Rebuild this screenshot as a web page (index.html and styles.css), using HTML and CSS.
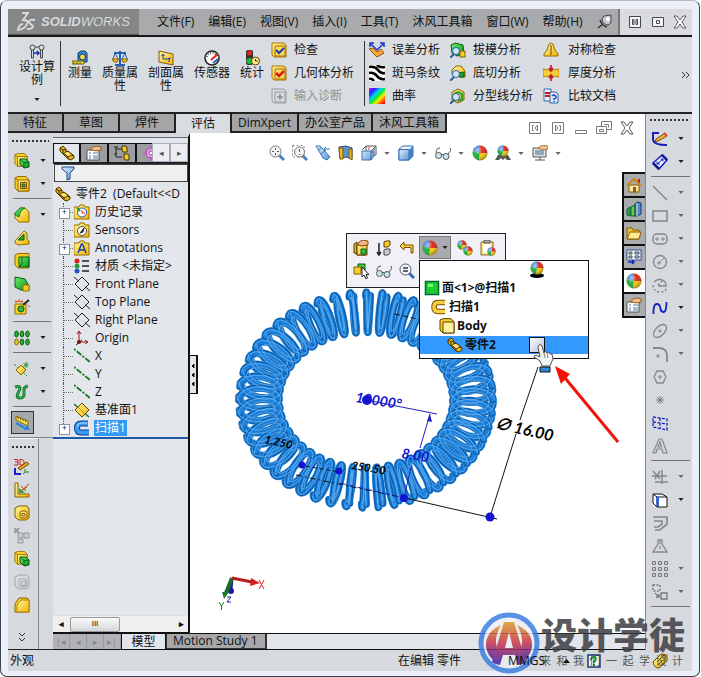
FILE: index.html
```html
<!DOCTYPE html>
<html lang="zh-CN">
<head>
<meta charset="utf-8">
<title>SOLIDWORKS</title>
<link rel="stylesheet" href="styles.css">
</head>
<body>
<svg class="sprite" aria-hidden="true">
<defs>
<linearGradient id="gy" x1="0" y1="0" x2="1" y2="1"><stop offset="0" stop-color="#fff6a0"/><stop offset="1" stop-color="#f0b400"/></linearGradient>
<linearGradient id="gg" x1="0" y1="0" x2="1" y2="1"><stop offset="0" stop-color="#6cf06c"/><stop offset="1" stop-color="#089018"/></linearGradient>
<linearGradient id="gb" x1="0" y1="0" x2="1" y2="1"><stop offset="0" stop-color="#e4f1fd"/><stop offset="1" stop-color="#5a95da"/></linearGradient>
<linearGradient id="rainbow" x1="0" y1="0" x2="1" y2="1"><stop offset="0" stop-color="#f0f"/><stop offset=".2" stop-color="#22f"/><stop offset=".38" stop-color="#0cf"/><stop offset=".52" stop-color="#0e3"/><stop offset=".68" stop-color="#fe0"/><stop offset=".85" stop-color="#f40"/><stop offset="1" stop-color="#e00"/></linearGradient>
<radialGradient id="shine" cx=".35" cy=".3" r=".7"><stop offset="0" stop-color="#fff" stop-opacity=".65"/><stop offset=".5" stop-color="#fff" stop-opacity="0"/><stop offset="1" stop-color="#000" stop-opacity=".3"/></radialGradient>
<linearGradient id="brand" x1="0" y1="0" x2="0" y2="1"><stop offset="0" stop-color="#d99a28"/><stop offset=".5" stop-color="#c8344a"/><stop offset="1" stop-color="#3a22b0"/></linearGradient>
</defs>
<symbol id="ball" viewBox="0 0 16 16"><path d="M8 8V.5A7.500 7.500 0 0 0 .8 6Z" fill="#2b6fd6"/><path d="M8 8L.8 6A7.500 7.500 0 0 0 7 15.400Z" fill="#1fae3c"/><path d="M8 8L7 15.400A7.500 7.500 0 0 0 15.500 8Z" fill="#f5c518"/><path d="M8 8H15.500A7.500 7.500 0 0 0 8 .5Z" fill="#d92b1f"/><circle cx="8" cy="8" r="7.500" fill="url(#shine)"/></symbol>
<symbol id="cube" viewBox="0 0 16 16"><path d="M1 2L4 .5H12L15 4V15H4L1 12Z" fill="#f6cf2c" stroke="#9a6a00"/><path d="M4 4H15V15H4Z" fill="url(#gy)" stroke="#9a6a00"/><path d="M1 2L4 4" stroke="#9a6a00"/></symbol>
<symbol id="boss" viewBox="0 0 16 16"><use href="#cube" width="14" height="14"/><path d="M6 6L12 6L15 9V14L10 15L6 11Z" fill="url(#gg)" stroke="#075e10"/><path d="M6 6L10 9.500V15M10 9.500L15 9" stroke="#075e10" fill="none"/></symbol>
<symbol id="cut" viewBox="0 0 16 16"><use href="#cube"/><path d="M6.500 6.500H12.500V12.500H6.500Z" fill="#e9d35a" stroke="#7a5500"/><path d="M8 8H11V11H8Z" fill="#3fae3f" stroke="#5a4a00"/></symbol>
<symbol id="fillet" viewBox="0 0 16 16"><path d="M1 6L6 1H11L15 5V15H5L1 11Z" fill="url(#gy)" stroke="#9a6a00"/><path d="M1 6L6 1H11Q6 3 5 10L1 8Z" fill="url(#gg)" stroke="#18871f"/></symbol>
<symbol id="rib" viewBox="0 0 16 16"><path d="M1 11L10 1L13 3V9L15 11V14L5 15L1 13Z" fill="url(#gy)" stroke="#9a6a00"/><path d="M4 10L10 4V10Z" fill="#28a838" stroke="#075e10"/></symbol>
<symbol id="shell" viewBox="0 0 16 16"><path d="M1 2L4 .5H15V15H4L1 12Z" fill="#f2cb27" stroke="#9a6a00"/><path d="M5 4H15V14H5Z" fill="url(#gg)" stroke="#075e10"/><path d="M5 14L8 11V4" stroke="#075e10" fill="none"/></symbol>
<symbol id="draft" viewBox="0 0 16 16"><path d="M1 1L11 3L15 10V14H7L1 11Z" fill="url(#gg)" stroke="#075e10"/><path d="M9 9H15V15H9Z" fill="#f6cf2c" stroke="#9a6a00"/></symbol>
<symbol id="wizard" viewBox="0 0 16 16"><path d="M1 5H12V15H1Z" fill="#f6cf2c" stroke="#9a6a00"/><circle cx="7" cy="10" r="3" fill="#3bb044" stroke="#075e10"/><path d="M9 6L15 1" stroke="#222" stroke-width="2"/><path d="M2 1V4M5 0V3M8 1V4M14 6L16 8M1 2.500H9" stroke="#d8621c"/></symbol>
<symbol id="pattern" viewBox="0 0 16 16"><g fill="#2fae3a" stroke="#0a5e12"><ellipse cx="2.500" cy="4" rx="1.800" ry="3"/><ellipse cx="8" cy="4" rx="1.800" ry="3"/><ellipse cx="13.500" cy="4" rx="1.800" ry="3"/><ellipse cx="8" cy="12" rx="1.800" ry="3"/><ellipse cx="13.500" cy="12" rx="1.800" ry="3"/><ellipse cx="2.500" cy="12" rx="1.800" ry="3" fill="#f4cd26" stroke="#8a6200"/></g></symbol>
<symbol id="refgeo" viewBox="0 0 16 16"><path d="M0 3L13 15" stroke="#159a2a" stroke-dasharray="3 1"/><path d="M7 4L12 9L7 14L2 9Z" fill="url(#gy)" stroke="#8a6200"/><path d="M12 1V7M9.500 2.500L14.500 5.500M14.500 2.500L9.500 5.500" stroke="#159a2a"/></symbol>
<symbol id="curve" viewBox="0 0 16 16"><path d="M1 3Q8 1 5 7Q1 14 6 14Q11 14 10 8Q9 3 14 2" fill="none" stroke="#13782a" stroke-width="3"/><path d="M1 3Q8 1 5 7Q1 14 6 14Q11 14 10 8Q9 3 14 2" fill="none" stroke="#3bc05a"/></symbol>
<symbol id="instant" viewBox="0 0 16 16"><path d="M1 1L13 6V11L1 5Z" fill="#f5e05a" stroke="#8a6a00"/><path d="M3 2V4M5.500 3V5M8 4V6M10.500 5V7" stroke="#6b5200"/><path d="M1 8L10 13" stroke="#2d84d8" stroke-width="2.500"/><path d="M9 15L15 15L12 9Z" fill="#2d84d8"/></symbol>
<symbol id="sk3d" viewBox="0 0 16 16"><path d="M0 .5H4V6H0M1 3H4M6 .5V6H8L10 5V2L8 .5Z" fill="none" stroke="#c22"/><path d="M1 9V15H7" fill="none" stroke="#1428c8" stroke-width="2"/><path d="M4 9L13 3L15 5L6 11Z" fill="#e9a92c" stroke="#7a4a00"/><path d="M11 10V13H15M11 13L9 15" stroke="#18871f" fill="none"/></symbol>
<symbol id="angle" viewBox="0 0 16 16"><path d="M1 1H4V12H15V15H1Z" fill="url(#gy)" stroke="#8a6200"/><path d="M5 11V6L11 11Z" fill="#28a838"/><path d="M8 8L15 2M7 4L12 9M7 9L13 5" stroke="#b94a18"/></symbol>
<symbol id="box2" viewBox="0 0 16 16"><path d="M1 3L5 1H13L15 4V13L12 15H5L1 12Z" fill="url(#gy)" stroke="#8a5c00"/><rect x="6" y="6" width="7" height="7" rx="2" fill="#f9e678" stroke="#8a5c00"/><path d="M8 11V8.500H11V11Z" fill="none" stroke="#8a5c00"/></symbol>
<symbol id="gray1" viewBox="0 0 16 16"><g fill="#c9ccd0" stroke="#97999c"><path d="M4 5H9V10H4ZM10 5H15V10H10ZM4 11H9V15H4Z"/><path d="M0 0L5 5M5 0L0 5" stroke-width="2"/></g></symbol>
<symbol id="gray2" viewBox="0 0 16 16"><g fill="none" stroke="#a4a6a9"><path d="M1 3L5 1H13L15 4V13L12 15H5L1 12Z"/><rect x="5" y="5" width="8" height="8" rx="2"/><rect x="7.500" y="7.500" width="4" height="4"/></g></symbol>
<symbol id="cham" viewBox="0 0 16 16"><path d="M1 7L5 1H13L15 3V15H1Z" fill="#f9d32f" stroke="#8a5c00"/><path d="M3 8L7 3H15V15H3Z" fill="url(#gy)" stroke="#b27c00"/></symbol>
<symbol id="more" viewBox="0 0 16 16"><path d="M5 3L8 6L11 3M5 8L8 11L11 8" fill="none" stroke="#333"/></symbol>
<symbol id="part" viewBox="0 0 16 16"><path d="M1 3L4 1L7 4V7L9 6L13 9L15 11V13L12 15L9 14L1 6Z" fill="#e8b01c" stroke="#4a3500"/><path d="M1 3L4 5L4 8L9 12L9 14M4 5L7 4M9 12L12 10L15 11M9 12L5 8L9 6" fill="none" stroke="#4a3500"/><path d="M5 8L9 7L12 10L9 11Z" fill="#ffe97a"/></symbol>
<symbol id="props" viewBox="0 0 16 16"><path d="M1 5H13V15H1Z" fill="#fff" stroke="#555"/><path d="M3 8H5M3 11H5M3 13H5M7 8H12M7 11H12M7 13H12" stroke="#4878b0"/><path d="M4 5Q7 1 11 1L15 2V5L10 6L7 5Z" fill="#f2c08a" stroke="#9a5b1c"/></symbol>
<symbol id="config" viewBox="0 0 16 16"><path d="M2 2V12H8M2 4H8M0 2H4M0 9H3" stroke="#222" fill="none"/><path d="M8 1L12 1L13 3V7H9L8 5ZM10 9H14L15 11V15H11L10 13Z" fill="#f2cb27" stroke="#4a3500"/></symbol>
<symbol id="target" viewBox="0 0 16 16"><path d="M9 0V16M1 8H16" stroke="#c04ec0"/><circle cx="9" cy="8" r="5" fill="#e6a0e6" stroke="#b23ab2"/><circle cx="9" cy="8" r="2" fill="#fff" stroke="#b23ab2"/></symbol>
<symbol id="funnel" viewBox="0 0 16 16"><path d="M2 2H14V4L10 8V14L7 15V8L2 4Z" fill="url(#gb)" stroke="#164a94"/></symbol>
<symbol id="hist" viewBox="0 0 16 16"><path d="M0 3H5L6 1H10L11 3H15V15H0Z" fill="url(#gy)" stroke="#9a6a00"/><circle cx="8" cy="8.500" r="4.500" fill="#fff" stroke="#2456b4"/><path d="M8 6V9H11" stroke="#c22" fill="none"/><path d="M3 4L6 7" stroke="#1a9a2a" stroke-width="2"/></symbol>
<symbol id="sensor" viewBox="0 0 16 16"><path d="M0 3H5L6 1H10L11 3H15V15H0Z" fill="url(#gy)" stroke="#9a6a00"/><circle cx="8" cy="9" r="4.500" fill="#f8f8f8" stroke="#555"/><path d="M6 11L10 6L9 10Z" fill="#333" stroke="#333"/></symbol>
<symbol id="annot" viewBox="0 0 16 16"><path d="M0 3H5L6 1H10L11 3H15V15H0Z" fill="url(#gy)" stroke="#9a6a00"/><path d="M4 13L7.500 4H8.500L12 13M5.500 10H10.500" fill="none" stroke="#1a3fae" stroke-width="1.500"/></symbol>
<symbol id="mat" viewBox="0 0 16 16"><circle cx="3" cy="3" r="2.500" fill="#d22"/><circle cx="3" cy="8" r="2.500" fill="#2a9a3a"/><circle cx="3" cy="13" r="2.500" fill="#2456c8"/><path d="M8 3H15M8 8H15M8 13H15" stroke="#222" stroke-width="1.500"/></symbol>
<symbol id="plane" viewBox="0 0 16 16"><path d="M8 1L15 8L8 15L1 8ZM0 1L16 15" fill="none" stroke="#222"/><path d="M5 5L11 11" stroke="#e3e6ea" stroke-width="1.500"/></symbol>
<symbol id="origin" viewBox="0 0 16 16"><path d="M5 13V2M5 12H14M3 4L5 1L7 4M11 10L14 12L11 14" fill="none" stroke="#a01018"/><path d="M2 15L8 10" stroke="#222"/><circle cx="5" cy="12" r="2" fill="#701018"/></symbol>
<symbol id="axis" viewBox="0 0 16 16"><path d="M0 1L16 14" stroke="#157a24" stroke-width="1.800" stroke-dasharray="2 1.500 6 1.500"/></symbol>
<symbol id="dplane" viewBox="0 0 16 16"><path d="M0 2L15 15" stroke="#157a24" stroke-width="1.500"/><path d="M8 1L15 8L8 15L1 8Z" fill="url(#gy)" stroke="#6a4a00"/><path d="M4 5L10 11" stroke="#c09000"/></symbol>
<symbol id="sweep" viewBox="0 0 16 16"><path d="M14 3.500H7Q3 3.500 3 8T7 12.500H14" fill="none" stroke="#7a4e00" stroke-width="5.500"/><path d="M14 3.500H7Q3 3.500 3 8T7 12.500H14" fill="none" stroke="#f6cf3c" stroke-width="3.500"/></symbol>
<symbol id="sweepb" viewBox="0 0 16 16"><path d="M14 3.500H7Q3 3.500 3 8T7 12.500H15" fill="none" stroke="#0b3a94" stroke-width="6"/><path d="M14 3.500H7Q3 3.500 3 8T7 12.500H15" fill="none" stroke="#3c9af4" stroke-width="4"/><path d="M13 3H7Q4 3 3 7" fill="none" stroke="#b4dcff"/></symbol>
<symbol id="study" viewBox="0 0 16 16"><g fill="none" stroke="#444"><circle cx="3.500" cy="3.500" r="2.500"/><circle cx="12.500" cy="3.500" r="2.500"/><path d="M2.500 6V14H4.500V6M11.500 6V14H13.500V6M6 3H10"/></g><path d="M5 9H10M8 7L10 9L8 11" stroke="#1730d0" fill="none" stroke-width="1.500"/></symbol>
<symbol id="measure" viewBox="0 0 16 16"><path d="M6 3L9 1H13L15 3V12H6Z" fill="#3a86d8" stroke="#12396e"/><circle cx="10.500" cy="7" r="3" fill="#f8d848" stroke="#12396e"/><path d="M0 11H12V14H0Z" fill="#f9e23c" stroke="#6b5a00"/><path d="M2 12V14M5 12V14M8 12V14" stroke="#6b5a00"/></symbol>
<symbol id="mass" viewBox="0 0 16 16"><path d="M8 1V14M2 3H14" stroke="#2360b8" stroke-width="2"/><path d="M3 3L1 9M3 3L6 9M13 3L10 9M13 3L15 9" stroke="#2360b8"/><path d="M0 9H6.500L5 12H2ZM9.500 9H16L14 12H11Z" fill="#f5c92a" stroke="#8a5c00"/><path d="M3 15H13" stroke="#2360b8" stroke-width="2"/></symbol>
<symbol id="section" viewBox="0 0 16 16"><path d="M1 1L15 4V15L1 12Z" fill="url(#gy)" stroke="#8a5c00"/><path d="M5 9V4M3.500 6L5 4L6.500 6M5 9H12V7M10 8L12 10L10 12" fill="none" stroke="#223fa8"/></symbol>
<symbol id="gauge" viewBox="0 0 16 16"><circle cx="8" cy="8" r="7" fill="#fff" stroke="#222" stroke-width="1.500"/><path d="M3 7A5 5 0 0 1 12 5" fill="none" stroke="#555" stroke-dasharray="1 1.500" stroke-width="2"/><path d="M7 10L14 4" stroke="#d22" stroke-width="2"/><path d="M9 13L14 9" stroke="#235fc4" stroke-width="2"/></symbol>
<symbol id="stats" viewBox="0 0 16 16"><rect x="2" y="0" width="7" height="15" rx="2" fill="#333"/><circle cx="5.500" cy="3" r="2.500" fill="#e8281c"/><circle cx="5.500" cy="11" r="3" fill="#24b83a"/><circle cx="11.500" cy="11" r="4" fill="#fde98c" stroke="#5a4a00"/><path d="M11.500 9V11H13.500" fill="none" stroke="#222"/></symbol>
<symbol id="chkb" viewBox="0 0 16 16"><path d="M1 1H13L15 3V15H3L1 13Z" fill="url(#gy)" stroke="#a87400"/><path d="M4 4H14V14H4Z" fill="#fbd95e" stroke="#a87400"/><path d="M5 8L8 11L13 6" fill="none" stroke="#1e3cae" stroke-width="2"/></symbol>
<symbol id="chkr" viewBox="0 0 16 16"><path d="M1 1H13L15 3V15H3L1 13Z" fill="url(#gy)" stroke="#a87400"/><path d="M4 4H14V14H4Z" fill="#fbd95e" stroke="#a87400"/><path d="M5 8L8 11L13 6" fill="none" stroke="#d81c10" stroke-width="2.500"/></symbol>
<symbol id="chkg" viewBox="0 0 16 16"><path d="M1 1H13L15 3V15H3L1 13ZM4 4H14V14H4Z" fill="none" stroke="#9a9c9e"/><path d="M9 6V12M6 9H12" stroke="#8a8c8e" stroke-width="1.500"/></symbol>
<symbol id="dev" viewBox="0 0 16 16"><path d="M0 7L4 6L8 10L12 7L15 11L8 15Z" fill="#f3a93c" stroke="#9a5200"/><path d="M2 2L8 8M8 8L14 2M1 5V1H5M11 1H15V5" fill="none" stroke="#1c34c4" stroke-width="1.500"/></symbol>
<symbol id="zebra" viewBox="0 0 16 16"><path d="M0 0H16V16H0Z" fill="#fff"/><path d="M0 2Q6 1 9 5T16 8M0 8Q5 7 8 11T16 14M0 14Q3 13 5 16M8 0Q11 3 16 2" stroke="#000" stroke-width="2.600" fill="none"/></symbol>
<symbol id="curv" viewBox="0 0 16 16"><path d="M0 0H16V16H0Z" fill="url(#rainbow)"/></symbol>
<symbol id="lens" viewBox="0 0 16 16"><circle cx="6" cy="9" r="3.500" fill="#cfe6fa" stroke="#2b5fa0"/><path d="M4 12L0 16" stroke="#2b5fa0" stroke-width="2"/></symbol>
<symbol id="dr2" viewBox="0 0 16 16"><path d="M1 3L5 1L13 3L14 12L7 14L2 11Z" fill="url(#gg)" stroke="#075e10"/><path d="M10 9H15V15H10Z" fill="#f6cf2c" stroke="#8a5c00"/><use href="#lens"/></symbol>
<symbol id="under" viewBox="0 0 16 16"><path d="M2 5L6 1H11L15 6V12H9L2 9Z" fill="url(#gy)" stroke="#8a5c00"/><path d="M8 8L14 7V12H10Z" fill="#1fa032" stroke="#075e10"/><use href="#lens"/></symbol>
<symbol id="parting" viewBox="0 0 16 16"><path d="M2 4L8 1L14 4V12L8 15L2 12Z" fill="url(#gy)" stroke="#8a5c00"/><path d="M4 6L8 4L12 6V11L8 13" fill="none" stroke="#1fa032" stroke-width="2"/><use href="#lens"/></symbol>
<symbol id="sym" viewBox="0 0 16 16"><path d="M6 2Q8 0 10 2L12 8L15 12V14H1V12L4 8Z" fill="url(#gy)" stroke="#9a6a00"/><path d="M8 3V13" stroke="#7a3a00"/></symbol>
<symbol id="thick" viewBox="0 0 16 16"><path d="M0 4Q8 7 16 4V12Q8 9 0 12Z" fill="#f8cf38" stroke="#b08000"/><path d="M8 0V5M6 3L8 6L10 3M8 16V11M6 13L8 10L10 13" fill="none" stroke="#c81818" stroke-width="1.600"/></symbol>
<symbol id="compare" viewBox="0 0 16 16"><path d="M1 1H8V13H1Z" fill="#eaf2ff" stroke="#3a66a8"/><path d="M2 5H7M2 8H7" stroke="#d11" stroke-width="2"/><path d="M7 4H13L15 6V15H7Z" fill="#dceafc" stroke="#3a66a8"/><path d="M9 8Q11 6 12.500 8T11 11V12M11 13V14" stroke="#1f49b8" fill="none" stroke-width="1.500"/></symbol>
<symbol id="pin" viewBox="0 0 16 16"><path d="M7 2L14 1L14 9L11 11Q5 10 5 5Z" fill="#c4c8ce" stroke="#44484c"/><path d="M3 6Q5 12 10 13M6 10L1 14" fill="none" stroke="#333" stroke-width="1.500"/><circle cx="11" cy="5" r="2" fill="#fff"/></symbol>
<symbol id="wsplit" viewBox="0 0 16 16"><path d="M2.500 2.500H13.500V13.500H2.500ZM5.500 5.500H7V10.500H5.500ZM9 5.500H10.500V10.500H9Z" fill="#f4f5f7" stroke="#44484c"/></symbol>
<symbol id="wmax" viewBox="0 0 16 16"><path d="M2.500 3.500H13.500V12.500H2.500ZM6.500 6.500H9.500V9.500H6.500Z" fill="#f4f5f7" stroke="#44484c"/></symbol>
<symbol id="wx" viewBox="0 0 16 16"><path d="M2 2H5L8 6L11 2H14L10 8L14 14H11L8 10L5 14H2L6 8Z" fill="#fff" stroke="#55595e"/></symbol>
<symbol id="wl" viewBox="0 0 16 16"><path d="M2.500 2.500H13.500V13.500H2.500ZM7 5.500H5.500V10.500H7M10.500 5L8 8L10.500 11Z" fill="none" stroke="#777b80"/></symbol>
<symbol id="wr" viewBox="0 0 16 16"><path d="M2.500 2.500H13.500V13.500H2.500ZM9 5.500H10.500V10.500H9M5.500 5L8 8L5.500 11Z" fill="none" stroke="#777b80"/></symbol>
<symbol id="wmin" viewBox="0 0 16 16"><path d="M2.500 10.500H13.500V13.500H2.500Z" fill="#fff" stroke="#777b80"/></symbol>
<symbol id="wrest" viewBox="0 0 16 16"><path d="M.5 6.500H10.500V13.500H.5ZM5.500 6.500V1.500H15.500V9.500H10.500M3.500 9.500H7.500V11.500H3.500ZM8 4.500H12.500V7.500" fill="none" stroke="#777b80"/></symbol>
<symbol id="zoomf" viewBox="0 0 16 16"><path d="M10 10L15 15" stroke="#4d82c4" stroke-width="3"/><circle cx="6.500" cy="6.500" r="5.500" fill="#f1f5f9" stroke="#777"/><path d="M6.500 3V10M3 6.500H10" stroke="#555" stroke-dasharray="2 3"/></symbol>
<symbol id="zooma" viewBox="0 0 16 16"><path d="M10 10L15 15" stroke="#4d82c4" stroke-width="3"/><path d="M.5 .5H12V12H.5Z" fill="none" stroke="#888" stroke-dasharray="2 2"/><circle cx="7.500" cy="7" r="5" fill="#f1f5f9" stroke="#777"/><path d="M7.500 4V7M7.500 9V10" stroke="#555"/></symbol>
<symbol id="prev" viewBox="0 0 16 16"><path d="M1 1L5 1L15 12L12 15L8 13Z" fill="url(#gb)" stroke="#2f74b8"/><path d="M3 5L6 3M6 9L10 6" stroke="#2f74b8"/><path d="M15 4H9M11 2L9 4L11 6" stroke="#2f74b8" fill="none"/></symbol>
<symbol id="sect" viewBox="0 0 16 16"><path d="M1 2L8 1L14 3V14L8 12L2 14Z" fill="#5b94cf" stroke="#2d4f7c"/><path d="M1 3H5V14H2ZM11 4H14V15L11 13Z" fill="#e8c02c" stroke="#7a5a00"/></symbol>
<symbol id="orient" viewBox="0 0 16 16"><path d="M5 1H15V10H5ZM5 1L1 5M15 1L11 5" fill="#fff" stroke="#555"/><path d="M1 6H10V15H1ZM10 6L13 3V11L10 15" fill="url(#gb)" stroke="#3b6fae"/><path d="M8 5V2M13 7H10" stroke="#d33"/></symbol>
<symbol id="disp" viewBox="0 0 16 16"><path d="M1 4L5 1H15V11L11 15H1Z" fill="#eef5fd" stroke="#3b6fae"/><path d="M1 4.500H11V15H1Z" fill="url(#gb)" stroke="#3b6fae"/><path d="M11 5L15 1V11L11 15Z" fill="#3f7ccc"/></symbol>
<symbol id="glass" viewBox="0 0 16 16"><g fill="#c9e6f2" stroke="#555"><circle cx="3.500" cy="10.500" r="3"/><circle cx="11" cy="11.500" r="3"/><path d="M6 10Q7 8 8 10M1 8Q1 3 5 3M13 9L16 5L15 3" fill="none"/></g></symbol>
<symbol id="scene" viewBox="0 0 16 16"><path d="M0 15L3 10H13L16 15H12L10 13L8 15L6 13L4 15Z" fill="#555"/><use href="#ball" x="2" y="0" width="12" height="12"/></symbol>
<symbol id="monitor" viewBox="0 0 16 16"><path d="M1 3H14V12H1Z" fill="#dfe5ea" stroke="#555"/><path d="M3 5H12V10H3Z" fill="#8fa8bd"/><path d="M8 12V15M3 15H13" stroke="#555"/><path d="M6 3L10 0L16 1V4L11 5Z" fill="#f2c08a" stroke="#b0763c"/></symbol>
<symbol id="editf" viewBox="0 0 16 16"><path d="M1 4L4 2V15H12V15L1 13Z" fill="#e8b01c" stroke="#5a3c00"/><path d="M4 5H14V15H4Z" fill="url(#gy)" stroke="#5a3c00"/><path d="M8 9H13V14H8Z" fill="#2fc43c" stroke="#063"/><path d="M4 4L9 0L15 1V5L8 6Z" fill="#f2b480" stroke="#8a4a14"/></symbol>
<symbol id="down2" viewBox="0 0 16 16"><path d="M3 3V15M1 12L3 15L5 12" stroke="#222" fill="none" stroke-width="1.500"/><path d="M8 2L10 1H14V5L12 7H8Z" fill="#f6cf2c" stroke="#5a3c00"/><path d="M8 10L10 9H14V13L12 15H8Z" fill="#ccc" stroke="#444"/></symbol>
<symbol id="back" viewBox="0 0 16 16"><path d="M1 6L5 2V5H14V13H12V7.500H5V10Z" fill="#f8d638" stroke="#7a5200"/></symbol>
<symbol id="balls" viewBox="0 0 16 16"><use href="#ball" x="0" y="0" width="10" height="10"/><use href="#ball" x="6" y="6" width="10" height="10"/></symbol>
<symbol id="clip" viewBox="0 0 16 16"><path d="M1 2H13V15H1Z" fill="#f8e08c" stroke="#8a6a1c"/><path d="M3 4H11V13H3Z" fill="#fff"/><path d="M4 0H10V3H4Z" fill="#aaa" stroke="#555"/><use href="#ball" x="7" y="7" width="9" height="9"/></symbol>
<symbol id="sel" viewBox="0 0 16 16"><path d="M5 1H12V7H5Z" fill="#3fc43f" stroke="#075e10"/><path d="M1 4H8V11H1Z" fill="#f6cf2c" stroke="#8a5c00"/><path d="M9 4V14L11 12L13 16L14.500 15L13 11.500H16Z" fill="#fff" stroke="#222"/></symbol>
<symbol id="zoomsel" viewBox="0 0 16 16"><path d="M10 10L15 15" stroke="#3568b4" stroke-width="3"/><circle cx="6.500" cy="6.500" r="5.500" fill="#f1f5f9" stroke="#556"/><path d="M4 5H9M4 8H9" stroke="#334" stroke-width="1.500"/></symbol>
<symbol id="face" viewBox="0 0 16 16"><path d="M1.500 1.500H14.500V14.500H1.500Z" fill="#1fce34" stroke="#063" stroke-width="1.500"/><path d="M4 4H9V7H4Z" fill="#72ff7c"/></symbol>
<symbol id="body" viewBox="0 0 16 16"><path d="M1 2L4 .7H12L15 4V15H4L1 12Z" fill="#f6cf2c" stroke="#5a3c00"/><path d="M4 4H15V15H4Z" fill="#fff0a0" stroke="#5a3c00"/></symbol>
<symbol id="home" viewBox="0 0 16 16"><path d="M12 2H14V7H12Z" fill="#b22"/><path d="M3 8H13V15H3Z" fill="#fbe6a0" stroke="#8a5c00"/><path d="M1 8.500L8 2L15 8.500" fill="none" stroke="#c78a10" stroke-width="2"/><path d="M7 10H10V15H7Z" fill="#8a5c20"/></symbol>
<symbol id="books" viewBox="0 0 16 16"><path d="M1 8L4 6V15L1 14Z" fill="#3aa83a" stroke="#063"/><path d="M5 6L9 4V15H5Z" fill="#5fce4c" stroke="#063"/><path d="M9 3L11 1L15 2V13L11 15H9Z" fill="#4a8ad8" stroke="#123a70"/><path d="M11 2V15" stroke="#ffe45a"/></symbol>
<symbol id="folder" viewBox="0 0 16 16"><path d="M1 3H6L7 5H13V14H1Z" fill="#f0c23c" stroke="#8a5c00"/><path d="M4 7H15L13 14H1Z" fill="#ffe894" stroke="#8a5c00"/></symbol>
<symbol id="palette" viewBox="0 0 16 16"><path d="M1 1H15V11H1Z" fill="#fffbe0" stroke="#2a50a8"/><path d="M3 3H6V5H3ZM9 3H13V5H9ZM3 7H6V9H3ZM9 7H13V9H9Z" fill="#f0d84c" stroke="#2a50a8"/><path d="M2 13H8M6 11L8 13L6 15" stroke="#1225c0" fill="none" stroke-width="1.500"/></symbol>
<symbol id="sketch" viewBox="0 0 16 16"><path d="M7 2H1V9Q2 14 15 14" fill="none" stroke="#1520b8" stroke-width="2"/><path d="M4 8L13 2L15 5L6 10L3 11Z" fill="#f0b040" stroke="#7a4a00"/><path d="M12 2L15 5" stroke="#d44" stroke-width="2"/></symbol>
<symbol id="dim" viewBox="0 0 16 16"><path d="M1 9L10 1L15 6L7 15Z" fill="#eef2ff" stroke="#1520b8" stroke-width="1.500"/><path d="M1 9L7 15M10 1L15 6" stroke="#111a90" stroke-width="2.500"/><path d="M5 10L11 5M5 7.500V10H8M8.500 5H11V7.500" stroke="#1520b8" fill="none"/></symbol>
<symbol id="line" viewBox="0 0 16 16"><path d="M1 1L15 15" stroke="#85888c" stroke-width="1.500"/></symbol>
<symbol id="rect" viewBox="0 0 16 16"><path d="M1 3H15V13H1Z" fill="none" stroke="#85888c" stroke-width="1.500"/></symbol>
<symbol id="slot" viewBox="0 0 16 16"><rect x="1" y="3" width="14" height="10" rx="4" fill="none" stroke="#85888c" stroke-width="1.500"/><path d="M4 7H6V9H4ZM10 7H12V9H10Z" fill="none" stroke="#85888c"/></symbol>
<symbol id="circ" viewBox="0 0 16 16"><circle cx="8" cy="8" r="6.500" fill="none" stroke="#85888c" stroke-width="1.300"/><path d="M7 9L12 4M6 8H8V10H6Z" fill="none" stroke="#85888c"/></symbol>
<symbol id="arc" viewBox="0 0 16 16"><path d="M2 5Q7 0 12 4Q15 7 14 9H7V7" fill="none" stroke="#85888c" stroke-width="1.300"/><path d="M1 8Q2 15 8 15T14 11M6 8L11 3" fill="none" stroke="#85888c" stroke-width="1.500" stroke-dasharray="2 2"/></symbol>
<symbol id="spline" viewBox="0 0 16 16"><path d="M1.500 14Q1 4 5 4Q8 4 8.500 9Q9 12 12 12Q14.500 11 14.500 2" fill="none" stroke="#1520b8" stroke-width="1.800"/></symbol>
<symbol id="ell" viewBox="0 0 16 16"><ellipse cx="8" cy="8" rx="8" ry="4.500" transform="rotate(-45 8 8)" fill="none" stroke="#85888c" stroke-width="1.300"/><path d="M6 8H10M8 6V10" stroke="#85888c"/></symbol>
<symbol id="fil2" viewBox="0 0 16 16"><path d="M1 2H7Q15 2 15 10V16" fill="none" stroke="#85888c" stroke-width="1.800"/><path d="M4 10H8M6 8V12" stroke="#85888c"/></symbol>
<symbol id="poly" viewBox="0 0 16 16"><path d="M5 2H11L14 8L11 14H5L2 8Z" fill="none" stroke="#85888c" stroke-width="1.300"/><path d="M6 8H10M8 6V10" stroke="#85888c"/></symbol>
<symbol id="pt" viewBox="0 0 16 16"><path d="M8 4V12M4 8H12M5 5L11 11M11 5L5 11" stroke="#777a7e"/></symbol>
<symbol id="pl2" viewBox="0 0 16 16"><path d="M1 2L15 4V15L1 12ZM1 7L15 9M8 3V13" fill="none" stroke="#1520b8" stroke-width="1.300" stroke-dasharray="3 1.500"/></symbol>
<symbol id="txt" viewBox="0 0 16 16"><path d="M1 15L7 1H10L15 15H11L10 11H5L4 15ZM6 9H9.500L8 4Z" fill="none" stroke="#85888c" stroke-width="1.200"/></symbol>
<symbol id="trim" viewBox="0 0 16 16"><path d="M0 7H15M3 13H16M10 1V15M1 2L8 10M8 2L3 10" fill="none" stroke="#85888c" stroke-width="1.500"/></symbol>
<symbol id="conv" viewBox="0 0 16 16"><path d="M1 2H10L15 5V15H5L1 11ZM5 5H15M5 5V15M1 2L5 5" fill="#fff" stroke="#111"/><path d="M4 5H7V15H5Z" fill="#1f5fe0"/></symbol>
<symbol id="offs" viewBox="0 0 16 16"><path d="M1 2H15V9L8 15H3M2 6H10V9L6 12H2" fill="none" stroke="#85888c" stroke-width="1.700"/></symbol>
<symbol id="mir" viewBox="0 0 16 16"><path d="M6 2H10V6L15 14H1L6 6ZM8 3V6M8 8V11" fill="none" stroke="#85888c" stroke-width="1.300"/></symbol>
<symbol id="lin" viewBox="0 0 16 16"><path d="M.5 .5H3.500V3.500H.5ZM6.500 .5H9.500V3.500H6.500ZM12.500 .5H15.500V3.500H12.500ZM.5 6.500H3.500V9.500H.5ZM6.500 6.500H9.500V9.500H6.500ZM12.500 6.500H15.500V9.500H12.500ZM.5 12.500H3.500V15.500H.5ZM6.500 12.500H9.500V15.500H6.500ZM12.500 12.500H15.500V15.500H12.500Z" fill="#ccc" stroke="#777a7e"/></symbol>
<symbol id="move" viewBox="0 0 16 16"><path d="M1 1H8V7H1Z" fill="none" stroke="#777a7e" stroke-dasharray="2 1.500" stroke-width="1.500"/><path d="M9 9H15V15H9ZM3 9L7 13M7 10V13H4" fill="none" stroke="#777a7e" stroke-width="1.300"/></symbol>
<symbol id="dn" viewBox="0 0 7 4"><path d="M0 0H7L3.500 4Z" fill="currentColor"/></symbol>
</svg>

<div class="window">
<header class="menubar">
  <div class="logo"><svg width="20" height="22" viewBox="0 0 20 22"><path d="M5 2H11L6 9Q12 9 10 13Q8 18 1 19Q2 13 6 13M18 9Q12 8 12 11Q13 13 16 15Q16 18 10 18" fill="none" stroke="#d8dadc" stroke-width="1.800"/></svg><span><b>SOLID</b>WORKS</span></div>
  <nav class="menus"><button>文件(F)</button><button>编辑(E)</button><button>视图(V)</button><button>插入(I)</button><button>工具(T)</button><button>沐风工具箱</button><button>窗口(W)</button><button>帮助(H)</button><button aria-label="固定"><svg class="i"><use href="#pin"/></svg></button></nav>
  <div class="winctl"><button aria-label="拆分"><svg class="i"><use href="#wsplit"/></svg></button><button aria-label="最大化"><svg class="i"><use href="#wmax"/></svg></button><button aria-label="关闭"><svg class="i"><use href="#wx"/></svg></button></div>
</header>

<section class="ribbon">
  <button class="big study"><svg class="i"><use href="#study"/></svg><span>设计算例</span><svg class="dn"><use href="#dn"/></svg></button>
  <i class="vsep"></i>
  <div class="bigs">
    <button class="big two"><svg class="i"><use href="#measure"/></svg><span>测量</span></button>
    <button class="big"><svg class="i"><use href="#mass"/></svg><span>质量属性</span></button>
    <button class="big"><svg class="i"><use href="#section"/></svg><span>剖面属性</span></button>
    <button class="big"><svg class="i"><use href="#gauge"/></svg><span>传感器</span></button>
    <button class="big two"><svg class="i"><use href="#stats"/></svg><span>统计</span></button>
  </div>
  <div class="col"><button><svg class="i"><use href="#chkb"/></svg>检查</button><button><svg class="i"><use href="#chkr"/></svg>几何体分析</button><button disabled><svg class="i"><use href="#chkg"/></svg>输入诊断</button></div>
  <i class="vsep mid"></i>
  <div class="col"><button><svg class="i"><use href="#dev"/></svg>误差分析</button><button><svg class="i"><use href="#zebra"/></svg>斑马条纹</button><button><svg class="i"><use href="#curv"/></svg>曲率</button></div>
  <div class="col"><button><svg class="i"><use href="#dr2"/></svg>拔模分析</button><button><svg class="i"><use href="#under"/></svg>底切分析</button><button><svg class="i"><use href="#parting"/></svg>分型线分析</button></div>
  <div class="col wide"><button><svg class="i"><use href="#sym"/></svg>对称检查</button><button><svg class="i"><use href="#thick"/></svg>厚度分析</button><button><svg class="i"><use href="#compare"/></svg>比较文档</button></div>
  <button class="overflow" aria-label="更多"><svg width="9" height="8" viewBox="0 0 9 8"><path d="M1 1L4 4L1 7M5 1L8 4L5 7" fill="none" stroke="#333"/></svg></button>
</section>

<div class="work">
 <div class="main">
  <div class="tabrow">
   <div class="tabs"><button>特征</button><button>草图</button><button>焊件</button><button class="on">评估</button><button>DimXpert</button><button>办公室产品</button><button>沐风工具箱</button></div>
   <div class="docctl"><button aria-label="左"><svg class="i"><use href="#wl"/></svg></button><button aria-label="右"><svg class="i"><use href="#wr"/></svg></button><button aria-label="最小化"><svg class="i"><use href="#wmin"/></svg></button><button aria-label="还原"><svg class="i"><use href="#wrest"/></svg></button><button aria-label="关闭文档"><svg class="i"><use href="#wx"/></svg></button></div>
  </div>
  <div class="below">
   <aside class="left">
    <div class="bar first">
     <i class="grip"></i>
     <button class="t"><svg class="i"><use href="#boss"/></svg><svg class="dn"><use href="#dn"/></svg></button>
     <button class="t"><svg class="i"><use href="#cut"/></svg><svg class="dn"><use href="#dn"/></svg></button>
     <hr>
     <button class="t"><svg class="i"><use href="#fillet"/></svg><svg class="dn"><use href="#dn"/></svg></button>
     <button class="t"><svg class="i"><use href="#rib"/></svg></button>
     <button class="t"><svg class="i"><use href="#shell"/></svg></button>
     <button class="t"><svg class="i"><use href="#draft"/></svg></button>
     <button class="t"><svg class="i"><use href="#wizard"/></svg></button>
     <hr>
     <button class="t"><svg class="i"><use href="#pattern"/></svg><svg class="dn"><use href="#dn"/></svg></button>
     <hr>
     <button class="t"><svg class="i"><use href="#refgeo"/></svg><svg class="dn"><use href="#dn"/></svg></button>
     <button class="t"><svg class="i"><use href="#curve"/></svg><svg class="dn"><use href="#dn"/></svg></button>
     <hr>
     <button class="t pressed"><svg class="i"><use href="#instant"/></svg></button>
    </div>
    <div class="bar second">
     <i class="grip"></i>
     <button class="t"><svg class="i"><use href="#sk3d"/></svg></button>
     <button class="t"><svg class="i"><use href="#angle"/></svg></button>
     <button class="t"><svg class="i"><use href="#box2"/></svg></button>
     <button class="t"><svg class="i"><use href="#gray1"/></svg></button>
     <button class="t"><svg class="i"><use href="#boss"/></svg></button>
     <button class="t"><svg class="i"><use href="#gray2"/></svg></button>
     <button class="t"><svg class="i"><use href="#cham"/></svg></button>
     <button class="t last"><svg class="i"><use href="#more"/></svg></button>
    </div>
   </aside>
   <div class="center">
    <div class="stage">
     <section class="panel">
      <div class="ptabs"><button class="on"><svg class="i"><use href="#part"/></svg></button><button><svg class="i"><use href="#props"/></svg></button><button><svg class="i"><use href="#config"/></svg></button><button class="cutoff"><svg class="i"><use href="#target"/></svg></button><button class="sc">◂</button><button class="sc">▸</button></div>
      <label class="filter"><svg class="i"><use href="#funnel"/></svg><input type="text" aria-label="过滤"></label>
      <ul class="tree">
       <li class="root"><svg class="i"><use href="#part"/></svg><span>零件2&nbsp; (Default&lt;&lt;D</span></li>
       <li class="exp"><svg class="i"><use href="#hist"/></svg><span>历史记录</span></li>
       <li><svg class="i"><use href="#sensor"/></svg><span>Sensors</span></li>
       <li class="exp"><svg class="i"><use href="#annot"/></svg><span>Annotations</span></li>
       <li><svg class="i"><use href="#mat"/></svg><span>材质 &lt;未指定&gt;</span></li>
       <li><svg class="i"><use href="#plane"/></svg><span>Front Plane</span></li>
       <li><svg class="i"><use href="#plane"/></svg><span>Top Plane</span></li>
       <li><svg class="i"><use href="#plane"/></svg><span>Right Plane</span></li>
       <li><svg class="i"><use href="#origin"/></svg><span>Origin</span></li>
       <li><svg class="i"><use href="#axis"/></svg><span>X</span></li>
       <li><svg class="i"><use href="#axis"/></svg><span>Y</span></li>
       <li><svg class="i"><use href="#axis"/></svg><span>Z</span></li>
       <li><svg class="i"><use href="#dplane"/></svg><span>基准面1</span></li>
       <li class="exp chosen"><svg class="i"><use href="#sweepb"/></svg><span>扫描1</span></li>
      </ul>
      <div class="hscroll"><b>◂</b><i>III</i><b class="end">▸</b></div>
     </section>
     <main class="view">
      <svg class="scene" width="455" height="503" viewBox="190 132 455 503">
       <g id="coil"></g>
       <g fill="none" stroke="#111">
        <path d="M395 313L422 319" stroke-dasharray="5 3"/>
        <path d="M296 474L405 497" stroke-dasharray="6 3 2 3"/>
        <path d="M405 497L497 518M490 516L516 433M520 419L538 366"/>
        <path d="M299 464L340 471" stroke-dasharray="4 3"/>
       </g>
       <g fill="none" stroke="#1a22c0"><path d="M366 399L437 413M430 413L420 447M404 497L411 466"/><path d="M340 482L404 497" stroke-dasharray="6 3"/></g>
       <path d="M430 413L427 420L432 421Z" fill="#1a22c0"/>
       <g fill="#1414d0"><circle cx="302" cy="464" r="3.500"/><circle cx="339" cy="470" r="3.500"/><circle cx="404" cy="497" r="4"/><circle cx="490" cy="516" r="4.500"/><circle cx="367" cy="399" r="5"/></g>
       <g class="dims">
        <text transform="translate(355 401) rotate(9)" fill="#1414d0">10000°</text>
        <text transform="translate(401 457) rotate(9)" fill="#1414d0">8.00</text>
        <text transform="translate(494 427) rotate(13)" class="big-dim">∅ 16.00</text>
        <text transform="translate(264 442) rotate(12)" class="small-dim">1.250</text>
        <text transform="translate(351 468) rotate(9)" class="small-dim">250.50</text>
       </g>
       <g><path d="M232 577L231 589" stroke="#1b1ba8" stroke-width="3"/><circle cx="231" cy="590" r="3" fill="#1b1ba8"/><path d="M232 577L226 592" stroke="#1d6b28" stroke-width="4"/><path d="M222 591H229L224 598Z" fill="#1d7b28"/><path d="M232 577L252 581" stroke="#b81c1c" stroke-width="3"/><path d="M251 577L260 582L250 585Z" fill="#d42020"/>
       <path d="M259 579L264 588M264 579L259 588" stroke="#d42020"/><path d="M219 601L221.500 605L224 601M221.500 605V609" stroke="#1d7b28" fill="none"/><path d="M227 596H231L227 601H231" stroke="#1b1ba8" fill="none"/></g>
       <path d="M618 441L565 377" stroke="#f01408" stroke-width="3"/><path d="M555 365L570 373L561 383Z" fill="#f01408"/>
      </svg>
      <div class="hud">
       <button><svg class="i"><use href="#zoomf"/></svg></button><button><svg class="i"><use href="#zooma"/></svg></button><button><svg class="i"><use href="#prev"/></svg></button><button><svg class="i"><use href="#sect"/></svg></button><button><svg class="i"><use href="#orient"/></svg><svg class="dn"><use href="#dn"/></svg></button><button><svg class="i"><use href="#disp"/></svg><svg class="dn"><use href="#dn"/></svg></button><button><svg class="i"><use href="#glass"/></svg><svg class="dn"><use href="#dn"/></svg></button><button><svg class="i"><use href="#ball"/></svg></button><button><svg class="i"><use href="#scene"/></svg><svg class="dn"><use href="#dn"/></svg></button><button><svg class="i"><use href="#monitor"/></svg><svg class="dn"><use href="#dn"/></svg></button>
      </div>
      <button class="handle" aria-label="折叠"><svg width="4" height="25" viewBox="0 0 4 25"><path d="M3 2V6L1 4ZM3 11V15L1 13ZM3 20V24L1 22Z" stroke="#111"/></svg></button>
      <div class="taskpane"><button><svg class="i"><use href="#home"/></svg></button><button><svg class="i"><use href="#books"/></svg></button><button><svg class="i"><use href="#folder"/></svg></button><button><svg class="i"><use href="#palette"/></svg></button><button class="on"><svg class="i"><use href="#ball"/></svg></button><button><svg class="i"><use href="#props"/></svg></button></div>
      <div class="ctx">
       <div><button><svg class="i"><use href="#editf"/></svg></button><button><svg class="i"><use href="#down2"/></svg></button><button><svg class="i"><use href="#back"/></svg></button><button class="on"><svg class="i"><use href="#ball"/></svg><svg class="dn"><use href="#dn"/></svg></button><button><svg class="i"><use href="#balls"/></svg></button><button><svg class="i"><use href="#clip"/></svg></button></div>
       <div><button><svg class="i"><use href="#sel"/></svg></button><button><svg class="i"><use href="#glass"/></svg></button><button><svg class="i"><use href="#zoomsel"/></svg></button></div>
      </div>
      <div class="popup">
       <div class="phead"><svg width="16" height="17" viewBox="0 0 16 17"><ellipse cx="8" cy="14.500" rx="7" ry="2.500"/><use href="#ball" x="1" width="14" height="14"/></svg></div>
       <button class="l1"><svg class="i"><use href="#face"/></svg>面&lt;1&gt;@扫描1</button>
       <button class="l2"><svg class="i"><use href="#sweep"/></svg>扫描1</button>
       <button class="l3"><svg class="i"><use href="#body"/></svg>Body</button>
       <button class="l4"><svg class="i"><use href="#part"/></svg>零件2<i class="swatch"></i></button>
      </div>
      <svg class="hand" width="22" height="32" viewBox="0 0 22 32"><path d="M6 1Q8 0 9 2L11 9L12 7L14 9L16 8L17 10L19 10L20 15L17 22H9L7 17L1 13Q1 10 5 12L7 13L5 3Z" fill="#f4f4f4" stroke="#555"/><path d="M11 9L12 14M14 9L15 14" stroke="#888"/><path d="M7 23H17V28H7Z" fill="#2f86e0" stroke="#111"/></svg>
     </main>
    </div>
    <div class="btabs"><div class="nav"><button>|◂</button><button>◂</button><button>▸</button><button>▸|</button></div><button class="model">模型</button><button class="motion">Motion Study 1</button></div>
   </div>
  </div>
 </div>
 <aside class="right">
  <i class="grip"></i>
  <button class="t"><svg class="i"><use href="#sketch"/></svg><svg class="dn"><use href="#dn"/></svg></button>
  <button class="t"><svg class="i"><use href="#dim"/></svg><svg class="dn"><use href="#dn"/></svg></button>
  <hr>
  <button class="t g"><svg class="i"><use href="#line"/></svg><svg class="dn"><use href="#dn"/></svg></button>
  <button class="t g"><svg class="i"><use href="#rect"/></svg><svg class="dn"><use href="#dn"/></svg></button>
  <button class="t g"><svg class="i"><use href="#slot"/></svg><svg class="dn"><use href="#dn"/></svg></button>
  <button class="t g"><svg class="i"><use href="#circ"/></svg><svg class="dn"><use href="#dn"/></svg></button>
  <button class="t g"><svg class="i"><use href="#arc"/></svg><svg class="dn"><use href="#dn"/></svg></button>
  <button class="t"><svg class="i"><use href="#spline"/></svg><svg class="dn"><use href="#dn"/></svg></button>
  <button class="t g"><svg class="i"><use href="#ell"/></svg><svg class="dn"><use href="#dn"/></svg></button>
  <button class="t g"><svg class="i"><use href="#fil2"/></svg><svg class="dn"><use href="#dn"/></svg></button>
  <button class="t"><svg class="i"><use href="#poly"/></svg></button>
  <button class="t"><svg class="i"><use href="#pt"/></svg></button>
  <button class="t"><svg class="i"><use href="#pl2"/></svg></button>
  <button class="t"><svg class="i"><use href="#txt"/></svg></button>
  <hr>
  <button class="t g"><svg class="i"><use href="#trim"/></svg><svg class="dn"><use href="#dn"/></svg></button>
  <button class="t"><svg class="i"><use href="#conv"/></svg><svg class="dn"><use href="#dn"/></svg></button>
  <button class="t"><svg class="i"><use href="#offs"/></svg></button>
  <button class="t"><svg class="i"><use href="#mir"/></svg></button>
  <button class="t g"><svg class="i"><use href="#lin"/></svg><svg class="dn"><use href="#dn"/></svg></button>
  <button class="t g"><svg class="i"><use href="#move"/></svg><svg class="dn"><use href="#dn"/></svg></button>
  <hr>
 </aside>
</div>

<footer class="status"><span class="hint">外观</span><span class="mode">在编辑 零件</span><button class="units">MMGS</button><svg class="up" width="7" height="4" viewBox="0 0 7 4"><path d="M0 4H7L3.500 0Z"/></svg>
 <svg class="help" width="14" height="14" viewBox="0 0 14 14"><path d="M1 1H13V13H1Z" fill="#eef4fb" stroke="#1a3a7a" stroke-width="1.500"/><path d="M4 5Q5 2.500 7.500 3T8 7L7 8V9M7 10V12" fill="none" stroke="#189a2a" stroke-width="2"/></svg>
 <svg class="tag" width="16" height="16" viewBox="0 0 16 16"><path d="M1 9L9 1L15 2L15 8L7 15Q2 15 1 9Z" fill="url(#gy)" stroke="#6a4a00"/><circle cx="12" cy="4" r="1.500" fill="#fff" stroke="#6a4a00"/><path d="M5 9L9 5M6 12L11 7" stroke="#a07000"/></svg>
</footer>

<div class="mark">
 <svg width="62" height="62" viewBox="0 0 62 62"><circle cx="31" cy="31" r="28" fill="#eceef4" stroke="#3c7fe0" stroke-width="5"/><path d="M23 13Q7 20 8 35Q9 42 15 48L21 40Q14 29 23 13ZM39 13Q55 20 54 35Q53 42 47 48L41 40Q48 29 39 13Z" fill="url(#brand)"/><path d="M26 10H36L48 50Q44 53 40 53L37 43H25L22 53Q18 53 14 50ZM31 20L27 36H35Z" fill="url(#brand)"/></svg>
 <div class="words"><strong>设计学徒</strong><small>来&ensp;和&ensp;我&ensp;们&ensp;一&ensp;起&ensp;学&ensp;设&ensp;计</small></div>
</div>
</div>
<script src="scene.js"></script>
</body>
</html>
```
FILE: styles.css
```css
* { box-sizing: border-box; }
body { margin: 0; background: #fff; font: 12px/16px "Open Sans", "Noto Sans CJK SC", sans-serif; color: #111; }
button { font: inherit; color: inherit; background: none; border: 0; padding: 0; margin: 0; white-space: nowrap; }
button, svg { display: block; flex: none; }
.sprite { position: absolute; width: 0; height: 0; }
.i { width: 16px; height: 16px; }
.dn { width: 6px; height: 3px; color: #222; }

.window { position: relative; height: 100vh; min-height: 600px; display: flex; flex-direction: column; padding: 8px 7px 5px; margin-right: 1px; background: #eceef8; border: 1px solid #3c4250; border-top-color: #b4b8c2; border-radius: 7px; overflow: hidden; }

.menubar { display: flex; flex: none; height: 28px; background: #a8aaab; border-bottom: 2px solid #1a1a1a; }
.logo { display: flex; flex: none; align-items: center; gap: 4px; width: 131px; padding-left: 9px; background: #858686; color: #d8dadc; font: italic 13px "Liberation Sans", sans-serif; border-bottom: 1px solid #555; }
.menus { display: flex; flex: 1; align-items: center; gap: 14px; min-width: 0; padding-left: 18px; }
.winctl { display: flex; flex: none; align-items: center; justify-content: space-between; width: 74px; padding: 0 4px 0 7px; background: #d9dbde; border-left: 2px solid #777; }

.ribbon { display: flex; flex: none; height: 77px; background: #d9dde1; border-bottom: 2px solid #222; }
.big { display: flex; flex-direction: column; align-items: center; width: 36px; padding-top: 13px; line-height: 13px; }
.big span { white-space: normal; }
.big.two { width: 24px; }
.big.study { width: 36px; margin: 0 5px 0 11px; padding-top: 7px; }
.big.study .dn { margin-top: 12px; }
.vsep { width: 1px; margin: 4px 0 6px; background: #333; }
.bigs { display: flex; gap: 10px; margin: 0 7px; }
.col { display: flex; flex-direction: column; padding-top: 1px; margin-right: 10px; }
.col button { display: flex; align-items: center; gap: 7px; height: 23px; text-align: left; }
.col.wide button { gap: 9px; }
.col button:disabled { color: #8d9092; }
.vsep.mid { margin-right: 4px; }
.overflow { margin: 0 2px 0 auto; }

.work { display: flex; flex: 1; min-height: 0; }
.main { display: flex; flex: 1; min-width: 0; flex-direction: column; }
.tabrow { display: flex; flex: none; height: 19px; background: #fff; }
.tabs { display: flex; background: #d9dde1; }
.tabs button { min-width: 56px; padding: 0 6px; height: 19px; background: #a3a5a7; border: solid #222; border-width: 0 2px 2px 0; line-height: 15px; }
.tabs button.on { background: #d9dde1; border-bottom: 0; }
.docctl { display: flex; gap: 7px; margin-left: auto; padding: 6px 10px 0 0; position: relative; z-index: 1; }
.docctl button { height: 16px; }
.below { display: flex; flex: 1; min-height: 0; }

.left { display: flex; flex-direction: column; width: 45px; background: #d6dade; border-bottom: 1px solid #222; }
.bar.first { height: 309px; border-bottom: 1px solid #888; }
.bar.second { flex: 1; width: 31px; border-right: 1px solid #888; border-top: 1px solid #fff; }
.grip { display: block; height: 3px; margin: 7px 4px 6px; background: radial-gradient(circle at 1px 1px, #333 1px, transparent 1px) 0 0 / 4px 3px; }
.t { display: flex; align-items: center; gap: 10px; width: 100%; height: 23px; padding-left: 6px; }
.t.g .dn { color: #666; }
.left hr, .right hr { height: 1px; border: 0; margin: 3px 2px 4px 5px; background: #777; }
.t.pressed { width: 23px; margin-left: 3px; padding-left: 3px; background: #a6a9ac; border: 1px solid #333; }
.t.last { margin-top: 10px; }
.right { width: 47px; background: #d6dade; border-left: 1px solid #888; }
.right .grip { margin: 5px 4px 5px; }

.center { display: flex; flex: 1; min-width: 0; flex-direction: column; }
.stage { display: flex; flex: 1; min-height: 0; }
.panel { display: flex; flex: none; flex-direction: column; width: 137px; background: #e3e6ea; border-top: 4px solid #d6dade; border-right: 2px solid #111; border-bottom: 2px solid #111; overflow: hidden; }
.ptabs { display: flex; flex: none; height: 27px; padding-top: 5px; border-top: 1px solid #667; border-bottom: 2px solid #222; overflow: hidden; }
.ptabs button { width: 28px; padding: 1px 5px; background: #9b9da0; border: solid #111; border-width: 1px 2px 0 0; }
.ptabs button.on { background: #e3e6ea; border-left: 1px solid #111; }
.ptabs button.cutoff { width: 15px; overflow: hidden; border-right: 0; }
.ptabs button.sc { width: 18px; padding: 0; background: #eceef2; border: 1px solid #aab; color: #456; font-size: 9px; }
.filter { display: flex; flex: none; align-items: center; height: 18px; margin: 0 0 3px 1px; padding-left: 5px; background: #efefef; border: 1px solid #444; }
.filter input { flex: 1; min-width: 0; border: 0; background: none; font: inherit; }
.tree { flex: 1; min-height: 0; list-style: none; margin: 0; padding: 0; }
.tree li { position: relative; display: flex; align-items: center; gap: 5px; height: 18px; padding-left: 21px; white-space: nowrap; }
.tree li.root { padding-left: 2px; }
.tree span { padding: 0 1px; margin-left: -1px; }
.tree li:not(.root)::before { content: ""; position: absolute; left: 10px; top: 0; width: 9px; height: 18px; border-left: 1px dotted #555; background: linear-gradient(90deg, #777 50%, transparent 50%) 0 9px / 2px 1px repeat-x; }
.tree li.exp::after { content: "+"; position: absolute; left: 6px; top: 5px; width: 9px; height: 9px; border: 1px solid #8894a4; background: #fff; font: 9px/6px "Liberation Sans", sans-serif; text-align: center; color: #234; }
.tree li.chosen { height: 20px; border-bottom: 2px solid #1f5aa8; }
.tree li.chosen::before { height: 9px; }
.tree .chosen span { background: #3399f5; color: #fff; }
.hscroll { display: flex; flex: none; align-items: center; height: 17px; background: #efeff1; border-top: 1px solid #ddd; font-size: 9px; }
.hscroll b { width: 17px; text-align: center; }
.hscroll i { width: 50px; height: 15px; border: 1px solid #999; border-radius: 2px; background: linear-gradient(#fafafa, #d4d6d9); font: 8px/12px "Liberation Sans", sans-serif; text-align: center; }
.hscroll .end { margin-left: auto; width: 14px; }

.view { position: relative; flex: 1; min-width: 0; background: #fff; border-bottom: 1px solid #111; overflow: hidden; }
.scene { position: absolute; left: 0; top: 0; }
.dims { font: italic bold 14px Lato, sans-serif; }
.dims .big-dim { font-size: 16px; }
.dims .small-dim { font-size: 11px; }
.hud { display: flex; gap: 7px; padding: 12px 0 0 79px; }
.hud button { display: flex; align-items: center; }
.hud .dn { margin: 0 1px 0 7px; color: #666; }
.handle { position: absolute; left: -1px; top: 222px; width: 9px; height: 39px; padding-left: 2px; background: #e3e6ea; border: solid #111; border-width: 1px 2px 1px 0; }
.taskpane { position: absolute; right: 0; top: 39px; border: solid #111; border-width: 2px 0 0 2px; }
.taskpane button { width: 21px; height: 24px; padding: 2px; background: #a9abad; border-bottom: 2px solid #111; }
.taskpane button.on { background: #fff; }
.ctx { position: absolute; left: 156px; top: 100px; width: 160px; height: 55px; padding: 2px 0 0 5px; background: #f0f0f6; border: 1px solid #222; }
.ctx div { display: flex; align-items: center; gap: 5px; height: 23px; }
.ctx button { display: flex; align-items: center; padding: 0 1px; }
.ctx button.on { height: 23px; width: 32px; gap: 4px; padding-left: 2px; margin-left: -2px; background: #a9abb0; border: 1px solid #777; }
.popup { position: absolute; left: 229px; top: 127px; width: 170px; height: 99px; background: #fff; border: 1px solid #111; font-weight: bold; }
.phead { height: 17px; padding-left: 109px; }
.popup button { display: flex; align-items: center; width: 100%; height: 19px; gap: 2px; }
.popup .l1 { padding-left: 4px; }
.popup .l2 { padding-left: 11px; }
.popup .l3 { padding-left: 19px; }
.popup .l4 { height: 18px; padding-left: 27px; margin-top: 1px; background: #3399ff; }
.swatch { width: 16px; height: 16px; margin: 0 43px 0 auto; background: linear-gradient(135deg, #fff, #b8bcd8); border: 1px solid #111; }
.hand { position: absolute; left: 343px; top: 211px; }

.btabs { display: flex; flex: none; height: 16px; background: #e2e5e9; border-bottom: 1px solid #111; line-height: 14px; }
.nav { display: flex; width: 69px; background: #b0b2b5; border-right: 2px solid #111; color: #85878a; font-size: 9px; }
.nav button { width: 17px; border-right: 1px solid #999; }
.model { width: 44px; border-right: 1px solid #111; }
.motion { padding: 0 7px 0 6px; background: #a6a8aa; border: solid #333; border-width: 0 2px 1px 1px; }
.status { display: flex; flex: none; align-items: center; height: 21px; padding: 0 24px 0 2px; background: #d6d9dd; }
.mode { margin-left: auto; }
.units { position: relative; z-index: 2; margin-left: 47px; }
.up { margin-left: 18px; }
.help { margin-left: 17px; }
.tag { margin-left: 51px; }

.mark { position: absolute; right: 10px; bottom: 2px; display: flex; align-items: flex-start; opacity: .85; pointer-events: none; }
.words { display: flex; flex-direction: column; color: #3c3e42; width: 149px; }
.words strong { font: 900 36px/42px "Noto Sans CJK SC", sans-serif; margin-left: 1px; }
.words small { font-size: 11px; line-height: 14px; white-space: nowrap; }
```
FILE: scene.js
```js
// Spring closed into a ring: each turn is an almost closed loop round the tube,
// drawn back half first so that neighbouring turns overlap in depth order.
const NS = 'http://www.w3.org/2000/svg';
const coil = document.getElementById('coil');
const CX = 366, CY = 399, R = 107, TUBE = 20, TURNS = 48, K = 0.82, S = 0.57;
const LEAD = 0.25;

function point(theta, phi, r) {
  const d = R + r * Math.cos(phi);
  return [CX + d * Math.cos(theta), CY + K * d * Math.sin(theta) - S * r * Math.sin(phi)];
}
function turn(n, start, span, r) {
  let d = '';
  for (let i = 0; i <= 14; i++) {
    const phi = start + span * i / 14;
    const theta = (n * 2 * Math.PI + LEAD * phi) / TURNS;
    const p = point(theta, phi, r);
    d += (i ? 'L' : 'M') + p[0].toFixed(1) + ' ' + p[1].toFixed(1);
  }
  return d;
}
function stroke(d, color, width, opacity) {
  const p = document.createElementNS(NS, 'path');
  p.setAttribute('d', d);
  p.setAttribute('fill', 'none');
  p.setAttribute('stroke', color);
  p.setAttribute('stroke-width', width);
  p.setAttribute('stroke-linecap', 'round');
  p.setAttribute('stroke-linejoin', 'round');
  p.setAttribute('stroke-opacity', opacity || 1);
  coil.appendChild(p);
}
for (const offset of [Math.PI, 0]) {
  for (let n = 0; n < TURNS; n++) {
    const d = turn(n, offset, Math.PI, TUBE);
    stroke(d, '#4a9fe8', 8);
    stroke(d, '#0c5fae', 7);
    stroke(d, '#1a80dc', 4);
  }
}
for (let n = 0; n < TURNS; n++) {
  for (const r of [TUBE - 4, TUBE + 2]) {
    stroke(turn(n, 0, 2 * Math.PI, r), '#6fb8fa', 1, 0.7);
  }
}
```
